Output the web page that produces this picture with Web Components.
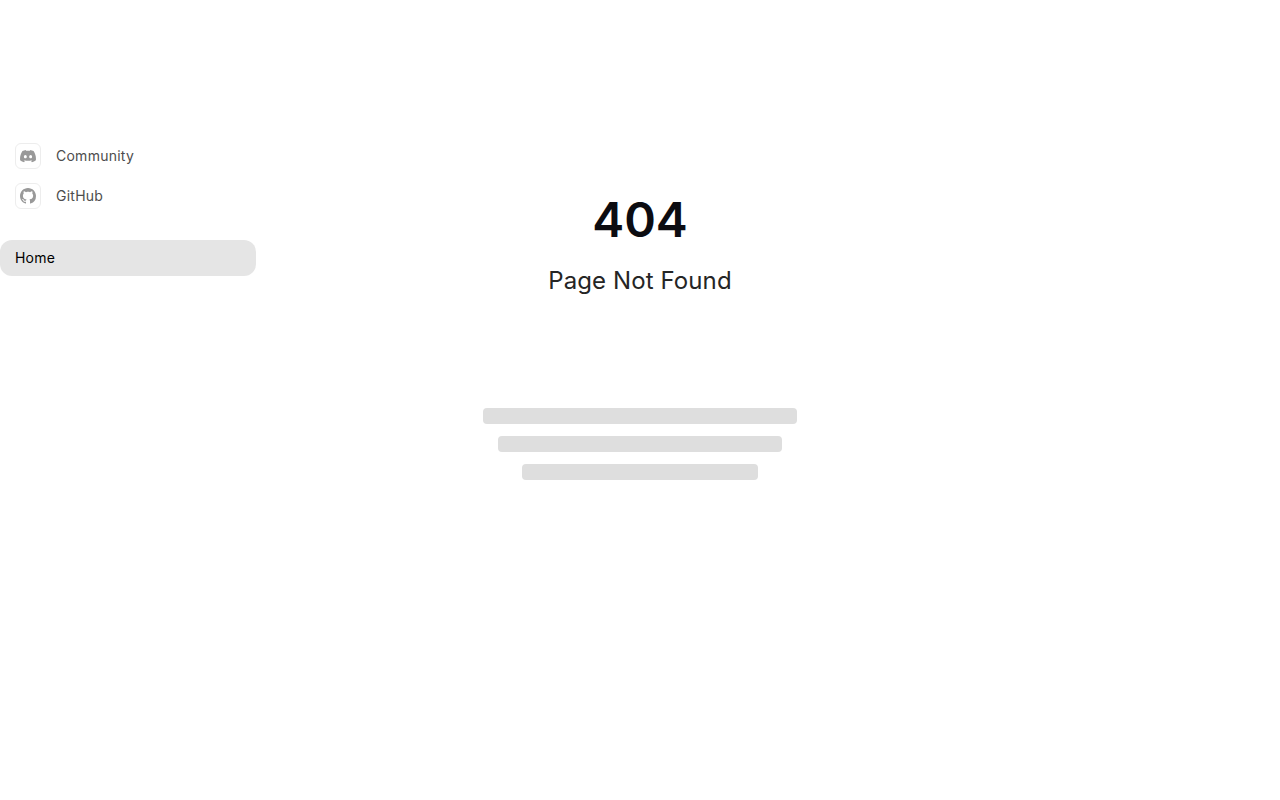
<!DOCTYPE html>
<html lang="en">
<head>
<meta charset="utf-8">
<title>404</title>
<style>
  html, body { margin: 0; height: 100%; background: #fff; font-family: Inter, "Liberation Sans", sans-serif; }
</style>
</head>
<body>
<app-shell>
  <side-bar slot="side">
    <icon-link label="Community" icon="discord" style="margin-bottom:4px"></icon-link>
    <icon-link label="GitHub" icon="github"></icon-link>
    <nav-item>Home</nav-item>
  </side-bar>
  <not-found></not-found>
</app-shell>
<script>
// icon paths, 16 box
const ICONS = {
  discord: `<path d="M13.55 3.03A13.2 13.2 0 0 0 10.3 2c-.14.25-.3.59-.41.86a12.2 12.2 0 0 0-3.78 0A9 9 0 0 0 5.7 2a13.1 13.1 0 0 0-3.26 1.03C.38 6.13-.18 9.15.1 12.13A13.3 13.3 0 0 0 4.1 14.2c.32-.44.61-.91.85-1.41-.47-.18-.92-.4-1.34-.65.11-.08.22-.17.33-.26a9.4 9.4 0 0 0 8.12 0c.11.09.22.18.33.26-.43.25-.88.47-1.35.65.25.5.53.97.85 1.41a13.2 13.2 0 0 0 4-2.07c.33-3.46-.57-6.45-2.34-9.1ZM5.35 10.3c-.79 0-1.44-.73-1.44-1.62s.63-1.62 1.44-1.62 1.45.73 1.44 1.62c0 .89-.64 1.62-1.44 1.62Zm5.3 0c-.79 0-1.44-.73-1.44-1.62s.63-1.62 1.44-1.62 1.45.73 1.44 1.62c0 .89-.63 1.62-1.44 1.62Z"/>`,
  github: `<path d="M8 0C3.58 0 0 3.58 0 8c0 3.54 2.29 6.53 5.47 7.59.4.07.55-.17.55-.38 0-.19-.01-.82-.01-1.49-2.01.37-2.53-.49-2.69-.94-.09-.23-.48-.94-.82-1.13-.28-.15-.68-.52-.01-.53.63-.01 1.08.58 1.23.82.72 1.21 1.87.87 2.33.66.07-.52.28-.87.51-1.07-1.78-.2-3.64-.89-3.64-3.95 0-.87.31-1.59.82-2.15-.08-.2-.36-1.02.08-2.12 0 0 .67-.21 2.2.82.64-.18 1.32-.27 2-.27s1.36.09 2 .27c1.53-1.04 2.2-.82 2.2-.82.44 1.1.16 1.92.08 2.12.51.56.82 1.27.82 2.15 0 3.07-1.87 3.75-3.65 3.95.29.25.54.73.54 1.48 0 1.07-.01 1.93-.01 2.2 0 .21.15.46.55.38A8.01 8.01 0 0 0 16 8c0-4.42-3.58-8-8-8Z"/>`
};

class AppShell extends HTMLElement {
  constructor() {
    super();
    this.attachShadow({ mode: "open" });
    this.shadowRoot.innerHTML = `
      <style>
        :host { display: grid; grid-template-columns: 256px 1fr; height: 800px; }
        main { padding-right: 256px; }
      </style>
      <slot name="side"></slot>
      <main><slot></slot></main>`;
  }
}

class SideBar extends HTMLElement {
  constructor() {
    super();
    this.attachShadow({ mode: "open" });
    this.shadowRoot.innerHTML = `
      <style>
        :host { display: block; padding-top: 138px; }
      </style>
      <slot></slot>`;
  }
}

class IconLink extends HTMLElement {
  connectedCallback() {
    const root = this.shadowRoot || this.attachShadow({ mode: "open" });
    root.innerHTML = `
      <style>
        :host { display: flex; align-items: center; gap: 15px; height: 36px; padding-left: 15px; font: 400 14px/20px Inter, "Liberation Sans", sans-serif; letter-spacing: .25px; color: #4d4d4d; }
        .box { box-sizing: border-box; width: 26px; height: 26px; border: 1px solid #ededed; border-radius: 6px; display: flex; align-items: center; justify-content: center; }
        svg { width: 16px; height: 16px; fill: #999; }
      </style>
      <span class="box"><svg viewBox="0 0 16 16">${ICONS[this.getAttribute("icon")]}</svg></span>
      <span>${this.getAttribute("label")}</span>`;
  }
}

class NavItem extends HTMLElement {
  constructor() {
    super();
    this.attachShadow({ mode: "open" });
    this.shadowRoot.innerHTML = `
      <style>
        :host { display: flex; align-items: center; height: 36px; margin-top: 26px; padding-left: 15px; border-radius: 12px; background: #e5e5e5; color: #000; font: 400 14px/20px Inter, "Liberation Sans", sans-serif; letter-spacing: .2px; }
      </style>
      <slot></slot>`;
  }
}

class NotFound extends HTMLElement {
  constructor() {
    super();
    this.attachShadow({ mode: "open" });
    this.shadowRoot.innerHTML = `
      <style>
        :host { display: flex; flex-direction: column; align-items: center; padding-top: 188px; margin-left: -256px; margin-right: -256px; font-family: Inter, "Liberation Sans", sans-serif; }
        h1 { margin: 0; font-size: 48px; line-height: 64px; font-weight: 600; color: #0c0c11; }
        h2 { margin: 13px 0 0; font-size: 24px; line-height: 32px; font-weight: 400; color: #252525; letter-spacing: .1px; }
        .lines { display: flex; flex-direction: column; align-items: center; gap: 12px; margin-top: 111px; }
        .lines div { height: 16px; border-radius: 4px; background: #dedede; }
      </style>
      <h1>404</h1>
      <h2>Page Not Found</h2>
      <div class="lines">
        <div style="width:314px"></div>
        <div style="width:284px"></div>
        <div style="width:236px"></div>
      </div>`;
  }
}

customElements.define("app-shell", AppShell);
customElements.define("side-bar", SideBar);
customElements.define("icon-link", IconLink);
customElements.define("nav-item", NavItem);
customElements.define("not-found", NotFound);
</script>
</body>
</html>
